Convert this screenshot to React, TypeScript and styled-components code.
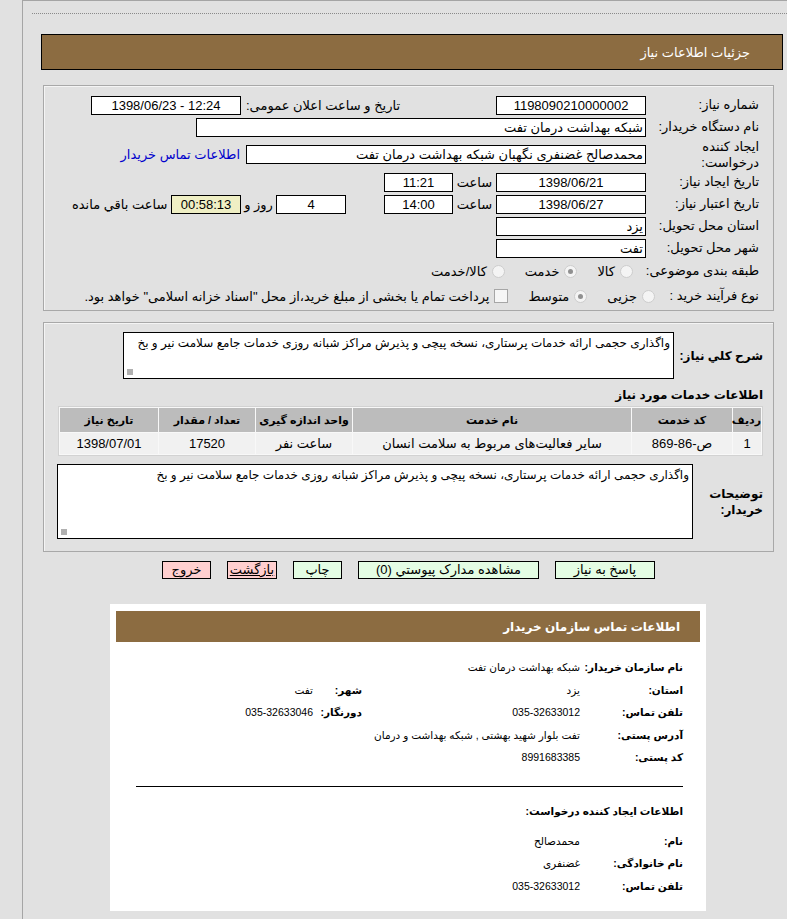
import React from 'react';
import styled, { createGlobalStyle } from 'styled-components';

const GlobalStyle = createGlobalStyle`
  html, body {
    margin: 0;
    padding: 0;
    background: #e1e1e1;
  }
  body {
    font-family: "Liberation Sans", "DejaVu Sans", sans-serif;
    font-size: 13px;
    color: #000;
  }
`;

const Frame = styled.div`
  margin-left: 22px;
  min-height: 919px;
  box-sizing: border-box;
  border-left: 1px solid #a5a5a5;
  border-top: 1px solid #a5a5a5;
  padding: 12px 0 0 9px;
`;

const DottedRule = styled.div`
  border-top: 1px dotted #8a8a8a;
`;

const TitleBar = styled.div`
  direction: rtl;
  margin: 20px 0 0 9px;
  width: 742px;
  height: 36px;
  box-sizing: border-box;
  border: 1px solid #000;
  background: #8c6c41;
  color: #fff;
  display: flex;
  align-items: center;
  padding-right: 32px;
`;

const Panel = styled.div<{ $top: number; $pad: string }>`
  direction: rtl;
  margin: ${(p) => p.$top}px 0 0 11px;
  width: 731px;
  box-sizing: border-box;
  border: 1px solid #a8a8a8;
  box-shadow: inset 1px 1px 0 #f4f4f4;
  padding: ${(p) => p.$pad};
`;

const Row = styled.div<{ $h: number; $top?: number }>`
  display: flex;
  align-items: center;
  height: ${(p) => p.$h}px;
  margin-top: ${(p) => p.$top ?? 0}px;
`;

const Label = styled.div<{ $w?: number; $bold?: boolean; $wrap?: boolean }>`
  width: ${(p) => p.$w ?? 113}px;
  flex: none;
  line-height: 16px;
  white-space: ${(p) => (p.$wrap ? 'normal' : 'nowrap')};
  font-weight: ${(p) => (p.$bold ? 'bold' : 'normal')};
  font-size: ${(p) => (p.$bold ? '12px' : 'inherit')};
`;

const SideText = styled.div<{ $w: number; $align?: string; $gap?: number }>`
  width: ${(p) => p.$w}px;
  flex: none;
  text-align: ${(p) => p.$align ?? 'center'};
  padding-left: ${(p) => p.$gap ?? 0}px;
  box-sizing: border-box;
  white-space: nowrap;
`;

const Field = styled.div<{ $w: number; $align?: string; $bg?: string; $ltr?: boolean }>`
  width: ${(p) => p.$w}px;
  flex: none;
  height: 19px;
  box-sizing: border-box;
  border: 1px solid #000;
  background: ${(p) => p.$bg ?? '#fff'};
  text-align: ${(p) => p.$align ?? 'center'};
  direction: ${(p) => (p.$ltr ? 'ltr' : 'rtl')};
  line-height: 17px;
  padding: 0 2px;
  white-space: nowrap;
  overflow: hidden;
`;

const Link = styled.a`
  color: #0000cc;
  text-decoration: none;
  margin-right: 6px;
  white-space: nowrap;
`;

const Options = styled.div`
  display: flex;
  align-items: center;
  white-space: nowrap;
`;

const Option = styled.span`
  display: inline-flex;
  align-items: center;
  gap: 5px;
  margin-left: 20px;
`;

const Radio = styled.span<{ $on?: boolean }>`
  width: 11px;
  height: 11px;
  border-radius: 50%;
  border: 1px solid #cdcdcd;
  background: #f4f4f4;
  position: relative;
  flex: none;
  &::after {
    content: '';
    display: ${(p) => (p.$on ? 'block' : 'none')};
    position: absolute;
    left: 3px;
    top: 3px;
    width: 5px;
    height: 5px;
    border-radius: 50%;
    background: #909090;
  }
`;

const Check = styled.span`
  width: 12px;
  height: 12px;
  border: 1px solid #a6a6a6;
  background: #f6f6f6;
  flex: none;
`;

const Memo = styled.div<{ $w: number; $h: number }>`
  width: ${(p) => p.$w}px;
  height: ${(p) => p.$h}px;
  flex: none;
  box-sizing: border-box;
  border: 1px solid #000;
  background: #fff;
  padding: 2px 3px;
  font-size: 12px;
  line-height: 16px;
  position: relative;
  overflow: hidden;
  &::after {
    content: '';
    position: absolute;
    left: 3px;
    bottom: 3px;
    width: 6px;
    height: 6px;
    background: radial-gradient(circle, #b0b0b0 0.8px, transparent 1px) 0 0 / 2px 2px;
  }
`;

const Heading = styled.div`
  font-weight: bold;
  font-size: 12px;
  line-height: 16px;
  margin: 8px 0 3px;
`;

const Grid = styled.table`
  width: 704px;
  table-layout: fixed;
  border: 1px solid #d2d2d2;
  border-spacing: 1px;
  background: #f8f8f8;
  th {
    height: 24px;
    background: #bcbcbc;
    font-weight: bold;
    font-size: 11px;
    white-space: nowrap;
    padding: 0;
  }
  td {
    height: 21px;
    background: #f1f1f1;
    text-align: center;
    white-space: nowrap;
    padding: 0;
  }
`;

const Buttons = styled.div`
  direction: rtl;
  width: 731px;
  margin: 9px 0 0 11px;
  display: flex;
  justify-content: center;
  gap: 16px;
`;

const Btn = styled.div<{ $w: number; $red?: boolean }>`
  width: ${(p) => p.$w}px;
  height: 18px;
  box-sizing: border-box;
  border: 1px solid #000;
  background: ${(p) => (p.$red ? '#ffcfcf' : '#e4fde4')};
  text-align: center;
  line-height: 16px;
  white-space: nowrap;
`;

const Card = styled.div`
  direction: rtl;
  width: 596px;
  margin: 25px 0 0 78px;
  background: #fff;
  padding: 7px 6px 0;
  box-sizing: border-box;
  height: 307px;
  font-size: 10.5px;
`;

const CardTitle = styled.div`
  height: 31px;
  background: #8c6c41;
  color: #fff;
  font-weight: bold;
  font-size: 12px;
  display: flex;
  align-items: center;
  padding-right: 20px;
`;

const CardBody = styled.div`
  padding: 14px 17px 0 0;
`;

const InfoRow = styled.div`
  display: flex;
  align-items: center;
  height: 22.5px;
`;

const InfoKey = styled.div<{ $w: number }>`
  width: ${(p) => p.$w}px;
  flex: none;
  font-weight: bold;
  white-space: nowrap;
`;

const InfoVal = styled.div<{ $w?: number }>`
  width: ${(p) => (p.$w ? `${p.$w}px` : 'auto')};
  flex: none;
  white-space: nowrap;
`;

const Rule = styled.div`
  border-top: 1px solid #000;
  margin: 17px 0 0 20px;
`;

const SubHeading = styled.div`
  font-weight: bold;
  line-height: 16px;
  margin: 16px 0 11px;
`;

const services = [
  { row: '1', code: 'ص-86-869', name: 'سایر فعالیت‌های مربوط به سلامت انسان', unit: 'ساعت نفر', qty: '17520', date: '1398/07/01' },
];

const desc = 'واگذاری حجمی ارائه خدمات پرستاری، نسخه پیچی و پذیرش مراکز شبانه روزی خدمات جامع سلامت نیر و بخ';

export default function App() {
  return (
    <>
      <GlobalStyle />
      <Frame>
        <DottedRule />
        <TitleBar>جزئیات اطلاعات نیاز</TitleBar>

        <Panel $top={15} $pad="8px 14px 1px 0">
          <Row $h={22}>
            <Label>شماره نیاز:</Label>
            <Field $w={150}>1198090210000002</Field>
            <SideText $w={255} $align="left" $gap={5}>تاریخ و ساعت اعلان عمومی:</SideText>
            <Field $w={150} $ltr>1398/06/23 - 12:24</Field>
          </Row>
          <Row $h={22}>
            <Label>نام دستگاه خریدار:</Label>
            <Field $w={450} $align="right">شبکه بهداشت درمان تفت</Field>
          </Row>
          <Row $h={33}>
            <Label $wrap>ایجاد کننده درخواست:</Label>
            <Field $w={400} $align="right">محمدصالح غضنفری نگهبان شبکه بهداشت درمان تفت</Field>
            <Link href="#">اطلاعات تماس خریدار</Link>
          </Row>
          <Row $h={22}>
            <Label>تاریخ ایجاد نیاز:</Label>
            <Field $w={150}>1398/06/21</Field>
            <SideText $w={43}>ساعت</SideText>
            <Field $w={69}>11:21</Field>
          </Row>
          <Row $h={22}>
            <Label>تاریخ اعتبار نیاز:</Label>
            <Field $w={150}>1398/06/27</Field>
            <SideText $w={43}>ساعت</SideText>
            <Field $w={69}>14:00</Field>
            <SideText $w={38} />
            <Field $w={70}>4</Field>
            <SideText $w={35}>روز و</SideText>
            <Field $w={70} $bg="#efefc4">00:58:13</Field>
            <SideText $w={100} $align="right">&nbsp;ساعت باقي مانده</SideText>
          </Row>
          <Row $h={22}>
            <Label>استان محل تحویل:</Label>
            <Field $w={150} $align="right">یزد</Field>
          </Row>
          <Row $h={22}>
            <Label>شهر محل تحویل:</Label>
            <Field $w={150} $align="right">تفت</Field>
          </Row>
          <Row $h={24}>
            <Label $w={126}>طبقه بندی موضوعی:</Label>
            <Options>
              <Option><Radio />کالا</Option>
              <Option><Radio $on />خدمت</Option>
              <Option><Radio />کالا/خدمت</Option>
            </Options>
          </Row>
          <Row $h={26}>
            <Label $w={104}>نوع فرآیند خرید :</Label>
            <Options>
              <Option><Radio />جزیی</Option>
              <Option><Radio $on />متوسط</Option>
              <Option><Check />پرداخت تمام یا بخشی از مبلغ خرید،از محل "اسناد خزانه اسلامی" خواهد بود.</Option>
            </Options>
          </Row>
        </Panel>

        <Panel $top={11} $pad="9px 10px 12px 0">
          <Row $h={47}>
            <Label $w={89} $bold>شرح کلي نیاز:</Label>
            <Memo $w={551} $h={47}>{desc}</Memo>
          </Row>
          <Heading>اطلاعات خدمات مورد نیاز</Heading>
          <Grid>
            <colgroup>
              <col style={{ width: 28 }} />
              <col style={{ width: 100 }} />
              <col style={{ width: 278 }} />
              <col style={{ width: 96 }} />
              <col style={{ width: 96 }} />
              <col style={{ width: 98 }} />
            </colgroup>
            <thead>
              <tr>
                <th>ردیف</th>
                <th>کد خدمت</th>
                <th>نام خدمت</th>
                <th>واحد اندازه گیری</th>
                <th>تعداد / مقدار</th>
                <th>تاریخ نیاز</th>
              </tr>
            </thead>
            <tbody>
              {services.map((s) => (
                <tr key={s.row}>
                  <td>{s.row}</td>
                  <td>{s.code}</td>
                  <td>{s.name}</td>
                  <td>{s.unit}</td>
                  <td>{s.qty}</td>
                  <td>{s.date}</td>
                </tr>
              ))}
            </tbody>
          </Grid>
          <Row $h={75} $top={8}>
            <Label $w={70} $bold $wrap>توضیحات خریدار:</Label>
            <Memo $w={636} $h={75}>{desc}</Memo>
          </Row>
        </Panel>

        <Buttons>
          <Btn $w={100}>پاسخ به نیاز</Btn>
          <Btn $w={181}>مشاهده مدارک پیوستي (0)</Btn>
          <Btn $w={49}>چاپ</Btn>
          <Btn $w={50} $red><u>بازگشت</u></Btn>
          <Btn $w={49} $red>خروج</Btn>
        </Buttons>

        <Card>
          <CardTitle>اطلاعات تماس سازمان خریدار</CardTitle>
          <CardBody>
            <InfoRow>
              <InfoKey $w={103}>نام سازمان خریدار:</InfoKey>
              <InfoVal>شبکه بهداشت درمان تفت</InfoVal>
            </InfoRow>
            <InfoRow>
              <InfoKey $w={103}>استان:</InfoKey>
              <InfoVal $w={218}>یزد</InfoVal>
              <InfoKey $w={49}>شهر:</InfoKey>
              <InfoVal>تفت</InfoVal>
            </InfoRow>
            <InfoRow>
              <InfoKey $w={103}>تلفن تماس:</InfoKey>
              <InfoVal $w={218}>035-32633012</InfoVal>
              <InfoKey $w={49}>دورنگار:</InfoKey>
              <InfoVal>035-32633046</InfoVal>
            </InfoRow>
            <InfoRow>
              <InfoKey $w={103}>آدرس پستی:</InfoKey>
              <InfoVal>تفت بلوار شهید بهشتی , شبکه بهداشت و درمان</InfoVal>
            </InfoRow>
            <InfoRow>
              <InfoKey $w={103}>کد پستی:</InfoKey>
              <InfoVal>8991683385</InfoVal>
            </InfoRow>
            <Rule />
            <SubHeading>اطلاعات ایجاد کننده درخواست:</SubHeading>
            <InfoRow>
              <InfoKey $w={103}>نام:</InfoKey>
              <InfoVal>محمدصالح</InfoVal>
            </InfoRow>
            <InfoRow>
              <InfoKey $w={103}>نام خانوادگی:</InfoKey>
              <InfoVal>غضنفری</InfoVal>
            </InfoRow>
            <InfoRow>
              <InfoKey $w={103}>تلفن تماس:</InfoKey>
              <InfoVal>035-32633012</InfoVal>
            </InfoRow>
          </CardBody>
        </Card>
      </Frame>
    </>
  );
}
